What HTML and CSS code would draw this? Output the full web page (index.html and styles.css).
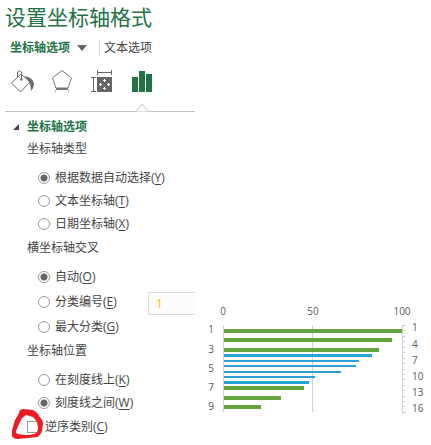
FILE: index.html
```
<!DOCTYPE html>
<html lang="zh-CN">
<head>
  <meta charset="UTF-8">
  <meta name="viewport" content="width=device-width, initial-scale=1.0">
  <title>设置坐标轴格式</title>
  <link rel="stylesheet" href="styles.css">
</head>
<body>
  <main class="workspace">
    <section class="panel">
      <h1>设置坐标轴格式</h1>

      <div class="tabs">
        <button type="button" class="tab active">坐标轴选项 <span class="caret"></span></button>
        <button type="button" class="tab">文本选项</button>
      </div>

      <div class="tools">
        <button type="button" class="tool" aria-label="填充与线条">
          <svg width="26" height="26" viewBox="0 0 26 26" fill="none" stroke="#6a6a6a">
            <path d="M2.500 14 L12 5 L21 13 L11.500 23 Z"/>
            <path d="M8.500 8 V3 Q10.500 0.500 12.500 3 V10"/>
            <circle cx="12.500" cy="10.500" r="1.200" fill="#6a6a6a" stroke="none"/>
            <path d="M15 7 Q24 8 25 15 Q25 19 22 22 Q22 15 18 10 Z" fill="#6a6a6a" stroke="none"/>
          </svg>
        </button>
        <button type="button" class="tool" aria-label="效果">
          <svg width="26" height="26" viewBox="0 0 26 26" fill="none" stroke="#777">
            <path d="M13 1.500 L22.500 9 L19 19 H7 L3.500 9 Z"/>
            <path d="M7 20 H19" stroke-width="2"/>
            <path d="M7 20 L6 24 M19 20 L20 24" stroke="#bbb"/>
          </svg>
        </button>
        <button type="button" class="tool" aria-label="大小与属性">
          <svg width="26" height="26" viewBox="0 0 26 26" fill="none" stroke="#666">
            <path d="M8.500 1 V6 M22.500 1 V6 M8 3.500 H23 M2 8.500 H7 M2 22.500 H7 M4.500 8 V23"/>
            <rect x="8" y="8" width="15" height="15" fill="#666" stroke="none"/>
            <path d="M15.500 10 V13 M15.500 18 V21 M10 15.500 H13 M18 15.500 H21 M14 11.500 H17 M14 19.500 H17 M11.500 14 V17 M19.500 14 V17" stroke="#fff"/>
          </svg>
        </button>
        <button type="button" class="tool" aria-label="坐标轴选项">
          <svg width="26" height="26" viewBox="0 0 26 26" fill="#217346">
            <path d="M3 8 H9 V23 H3 Z M10 2 H16 V23 H10 Z M17 5 H23 V23 H17 Z"/>
          </svg>
        </button>
      </div>
      <div class="divider">
        <svg width="14" height="9" viewBox="0 0 14 9" fill="#fff" stroke="#c3c3c3"><path d="M0 8.500 H1 L7 1 L13 8.500 H14"/></svg>
      </div>

      <h2><span class="expander"></span>坐标轴选项</h2>

      <fieldset>
        <legend>坐标轴类型</legend>
        <label><input type="radio" name="type" checked>根据数据自动选择(<u>Y</u>)</label>
        <label><input type="radio" name="type">文本坐标轴(<u>T</u>)</label>
        <label><input type="radio" name="type">日期坐标轴(<u>X</u>)</label>
      </fieldset>

      <fieldset class="roomy">
        <legend>横坐标轴交叉</legend>
        <label><input type="radio" name="cross" checked>自动(<u>O</u>)</label>
        <div class="row">
          <label><input type="radio" name="cross">分类编号(<u>E</u>)</label>
          <input type="text" class="number" value="1" aria-label="分类编号">
        </div>
        <label><input type="radio" name="cross">最大分类(<u>G</u>)</label>
      </fieldset>

      <fieldset>
        <legend>坐标轴位置</legend>
        <label><input type="radio" name="position">在刻度线上(<u>K</u>)</label>
        <label><input type="radio" name="position" checked>刻度线之间(<u>W</u>)</label>
      </fieldset>

      <div class="reverse">
        <label><input type="checkbox">逆序类别(<u>C</u>)</label>
        <svg class="marker" width="36" height="36" viewBox="0 0 36 36" fill="#ed1c24" fill-rule="evenodd">
          <path d="M9 4 L12 3 L22 4 Q27 7 28 10 Q32 14 32 18 L31 25 Q29 30 26 31 L17 32 L7 33 Q2 33 1 30 L1 24 L4 14 L7 9 Z M15 9 L11 12 L8 18 L5 25 Q5 28 7 28 L14 29 Q22 29 25 27 Q27 25 27 22 L26 16 L22 11 Z"/>
        </svg>
      </div>
    </section>

    <section class="chart">
      <svg viewBox="0 0 231 120" role="img" aria-label="条形图">
        <path class="axis" d="M23.500 25 V112 M112.500 25 V112 M202.500 25 V112"/>
        <path class="axis" d="M202 25.500 h4 M202 30.500 h3 M202 36.500 h3 M202 41.500 h3 M202 47.500 h3 M202 52.500 h3 M202 58.500 h3 M202 63.500 h3 M202 69.500 h3 M202 74.500 h3 M202 79.500 h3 M202 85.500 h3 M202 90.500 h3 M202 96.500 h3 M202 101.500 h3 M202 106.500 h3 M202 112.500 h4"/>
        <path class="green" d="M24 29 H202 V33 H24 Z M24 38 H192 V42 H24 Z M24 48 H179 V52 H24 Z M24 86 H104 V90 H24 Z M24 96 H81 V100 H24 Z M24 105 H61 V109 H24 Z"/>
        <path class="blue" d="M24 54 H172 V57 H24 Z M24 60 H159 V62 H24 Z M24 65 H156 V67 H24 Z M24 71 H141 V73 H24 Z M24 76 H115 V78 H24 Z M24 81 H109 V84 H24 Z"/>
        <g text-anchor="middle">
          <text x="23" y="15">0</text>
          <text x="113" y="15">50</text>
          <text x="202" y="15">100</text>
          <text x="11" y="33">1</text>
          <text x="11" y="53">3</text>
          <text x="11" y="72">5</text>
          <text x="11" y="91">7</text>
          <text x="11" y="110">9</text>
        </g>
        <g>
          <text x="212" y="31">1</text>
          <text x="212" y="48">4</text>
          <text x="212" y="64">7</text>
          <text x="212" y="80">10</text>
          <text x="212" y="96">13</text>
          <text x="212" y="112">16</text>
        </g>
      </svg>
    </section>
  </main>
</body>
</html>
```
FILE: styles.css
```
:root {
  --green: #217346;
  --text: #444;
  --line: #c3c3c3;
}

* {
  box-sizing: border-box;
}

body {
  margin: 0;
  background: #fff;
  color: var(--text);
  font-family: "Open Sans", "Noto Sans CJK SC", sans-serif;
  font-size: 12px;
  line-height: 20px;
}

.workspace {
  display: grid;
  grid-template-columns: 195px minmax(0, 1fr);
  column-gap: 5px;
}

.panel {
  padding: 0 0 8px 5px;
}

h1 {
  margin: 2px 0 0;
  color: var(--green);
  font-size: 21px;
  font-weight: 400;
  line-height: 30px;
  white-space: nowrap;
}

h2 {
  display: flex;
  align-items: center;
  margin: 5px 0 0;
  color: var(--green);
  font-size: 12px;
  line-height: 20px;
}

button {
  padding: 0;
  border: 0;
  background: none;
  color: inherit;
  font: inherit;
  cursor: pointer;
}

/* Tabs */
.tabs {
  display: flex;
  align-items: center;
  margin-top: 8px;
  padding-left: 5px;
  line-height: 16px;
}

.tab {
  white-space: nowrap;
}

.tab.active {
  display: flex;
  align-items: center;
  gap: 7px;
  margin-right: 4px;
  padding-right: 12px;
  border-right: 1px solid #ddd;
  color: var(--green);
  font-weight: 700;
}

.caret {
  border: 5px solid transparent;
  border-top: 6px solid #666;
  border-bottom: 0;
}

.tools {
  display: flex;
  gap: 14px;
  margin-top: 13px;
  padding-left: 4px;
}

.tool,
.tool svg {
  display: block;
}

.divider {
  height: 9px;
  margin-top: 8px;
  padding-left: 130px;
  background: linear-gradient(var(--line), var(--line)) bottom / 100% 1px no-repeat;
}

.divider svg {
  display: block;
}

.expander {
  width: 0;
  margin: 0 8px;
  border-left: 6px solid transparent;
  border-bottom: 6px solid #444;
}

/* Options */
fieldset {
  display: flex;
  flex-direction: column;
  gap: 3px;
  min-width: 0;
  margin: 0;
  padding: 0 0 0 33px;
  border: 0;
}

fieldset + fieldset {
  margin-top: 2px;
}

fieldset.roomy {
  gap: 5px;
}

legend {
  margin: 0 0 9px -11px;
  padding: 2px 0 0;
}

label {
  display: flex;
  align-items: center;
  white-space: nowrap;
}

u {
  text-underline-offset: 2px;
}

input[type="radio"],
input[type="checkbox"] {
  appearance: none;
  flex: none;
  width: 12px;
  height: 12px;
  margin: 0 5px 0 0;
  border: 1px solid #999;
  background: #fff;
}

input[type="radio"] {
  border-radius: 50%;
}

input[type="radio"]:checked {
  background: radial-gradient(circle, #666 3px, #fff 4px);
}

input[type="checkbox"] {
  margin-right: 6px;
}

.row {
  display: flex;
  justify-content: space-between;
  height: 20px;
}

.number {
  width: 47px;
  height: 23px;
  padding: 0 7px;
  border: 1px solid #ddd;
  border-right: 0;
  background: #fcfcfc;
  color: #ffc000;
  font: inherit;
}

.reverse {
  position: relative;
  margin-top: 4px;
  padding-left: 22px;
}

/* Hand-drawn ring over the checkbox */
.marker {
  position: absolute;
  top: -11px;
  left: 6px;
  pointer-events: none;
}

/* Chart */
.chart {
  align-self: end;
  padding-bottom: 25px;
}

.chart svg {
  display: block;
  width: 100%;
}

.chart text {
  fill: #595959;
  font-size: 10px;
}

.axis {
  fill: none;
  stroke: #d0d0d0;
}

.green {
  fill: #64a43c;
}

.blue {
  fill: #2a9fd8;
}
```
